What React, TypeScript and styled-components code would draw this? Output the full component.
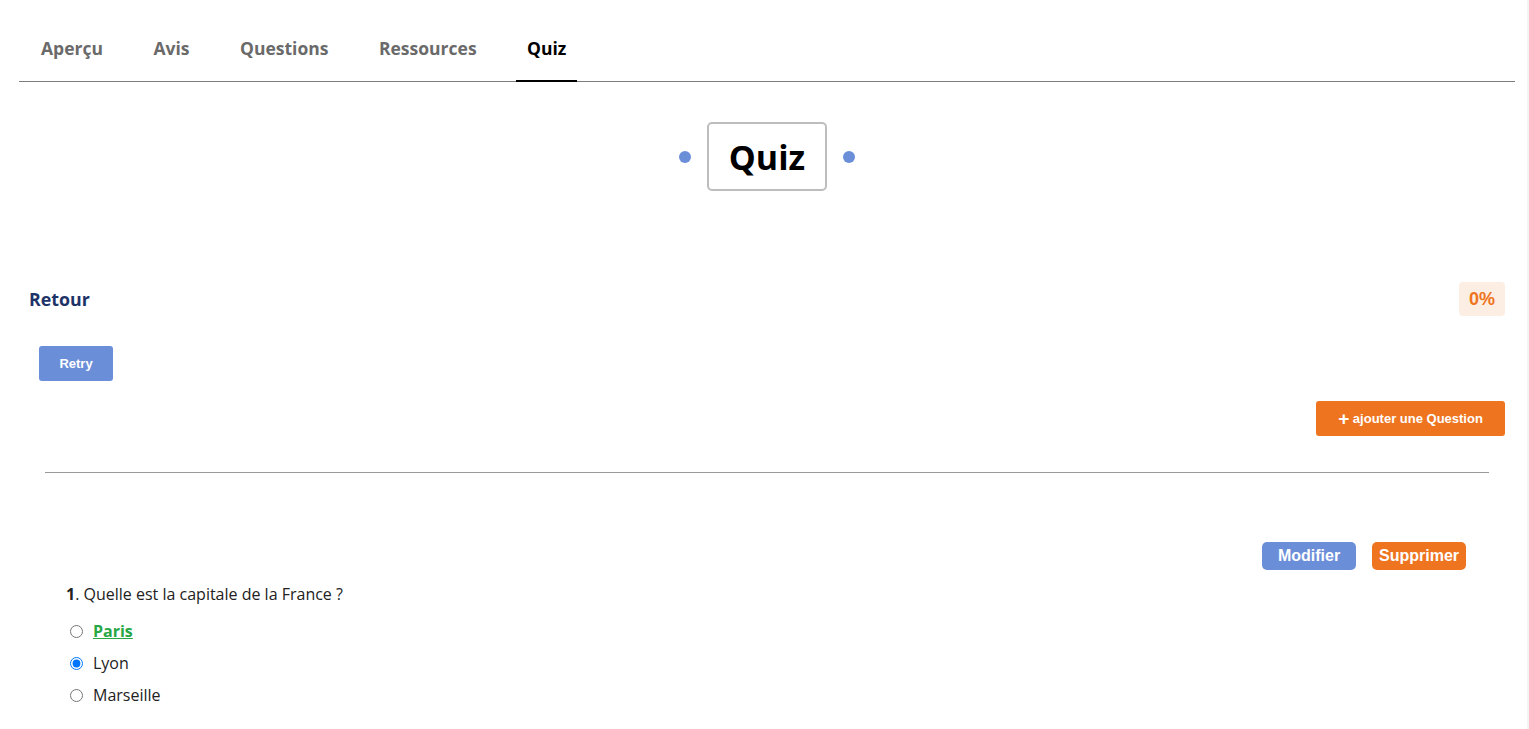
import React, { useState } from 'react';
import styled, { createGlobalStyle } from 'styled-components';

const GlobalStyle = createGlobalStyle`
  body {
    margin: 0;
    background: #fff;
    font-family: 'Open Sans', 'Noto Sans', sans-serif;
    color: #222;
  }
`;

const tabs = ['Aperçu', 'Avis', 'Questions', 'Ressources', 'Quiz'];

const answers = [
  { label: 'Paris', correct: true },
  { label: 'Lyon', correct: false },
  { label: 'Marseille', correct: false },
];

const App = () => {
  const [active, setActive] = useState('Quiz');
  const [picked, setPicked] = useState('Lyon');

  return (
    <>
      <GlobalStyle />
      <Page>
        <TabBar>
          {tabs.map((t) => (
            <Tab key={t} $active={t === active} onClick={() => setActive(t)}>
              {t}
            </Tab>
          ))}
        </TabBar>

        <TitleRow>
          <Dot />
          <TitleBox>Quiz</TitleBox>
          <Dot />
        </TitleRow>

        <HeadRow>
          <BackLink>Retour</BackLink>
          <Score>0%</Score>
        </HeadRow>

        <ActionRow>
          <SmallButton $color='#6b8ed9'>Retry</SmallButton>
        </ActionRow>

        <AddRow>
          <SmallButton $color='#ee7420' $wide>
            <span>+</span> ajouter une Question
          </SmallButton>
        </AddRow>

        <Divider />

        <QuestionBlock>
          <EditRow>
            <EditButton $color='#6b8ed9'>Modifier</EditButton>
            <EditButton $color='#ee7420'>Supprimer</EditButton>
          </EditRow>
          <QuestionText>
            <b>1</b>. Quelle est la capitale de la France ?
          </QuestionText>
          <AnswerList>
            {answers.map((a) => (
              <Answer key={a.label}>
                <input
                  type='radio'
                  name='q1'
                  checked={picked === a.label}
                  onChange={() => setPicked(a.label)}
                />
                <AnswerLabel $correct={a.correct}>{a.label}</AnswerLabel>
              </Answer>
            ))}
          </AnswerList>
        </QuestionBlock>
      </Page>
    </>
  );
};

export default App;

const Page = styled.div`
  min-height: 729px;
  padding: 0 12px 0 19px;
  border-right: 2px solid #f4f4f4;
  box-sizing: border-box;
`;

const TabBar = styled.div`
  display: flex;
  gap: 28.5px;
  padding-top: 27px;
  padding-left: 11px;
  border-bottom: 1px solid #7d7d7d;
`;

const Tab = styled.div<{ $active: boolean }>`
  font-size: 17.5px;
  font-weight: 700;
  color: ${(p) => (p.$active ? '#000' : '#6a6a6a')};
  padding: 9px 11px 20px;
  border-bottom: 2px solid ${(p) => (p.$active ? '#000' : 'transparent')};
  margin-bottom: -1px;
  cursor: pointer;
`;

const TitleRow = styled.div`
  display: flex;
  justify-content: center;
  align-items: center;
  gap: 16px;
  margin-top: 40px;
`;

const Dot = styled.span`
  width: 12px;
  height: 12px;
  border-radius: 50%;
  background: #6b8ed9;
`;

const TitleBox = styled.div`
  width: 116px;
  height: 65px;
  border: 2px solid #bdbdbd;
  border-radius: 5px;
  display: flex;
  align-items: center;
  justify-content: center;
  font-size: 34px;
  font-weight: 700;
  color: #000;
`;

const HeadRow = styled.div`
  display: flex;
  justify-content: space-between;
  align-items: center;
  margin-top: 91px;
  padding: 0 10px;
`;

const BackLink = styled.a`
  font-size: 17.8px;
  font-weight: 700;
  color: #1e3368;
  cursor: pointer;
`;

const Score = styled.div`
  background: #fdeee4;
  color: #ee7420;
  font-family: 'Liberation Sans', Arial, sans-serif;
  font-weight: 700;
  font-size: 18px;
  width: 46px;
  height: 34px;
  border-radius: 4px;
  display: flex;
  align-items: center;
  justify-content: center;
`;

const ActionRow = styled.div`
  display: flex;
  padding-left: 20px;
  margin-top: 30px;
`;

const AddRow = styled.div`
  display: flex;
  justify-content: flex-end;
  margin-top: 20px;
  padding-right: 10px;
`;

const SmallButton = styled.button<{ $color: string; $wide?: boolean }>`
  background: ${(p) => p.$color};
  color: #fff;
  border: none;
  border-radius: 3px;
  font-family: 'Liberation Sans', Arial, sans-serif;
  font-weight: 700;
  font-size: 13px;
  height: 35px;
  width: ${(p) => (p.$wide ? '189px' : '74px')};
  cursor: pointer;

  span {
    font-size: 19px;
    line-height: 0;
    vertical-align: -2px;
  }
`;

const Divider = styled.hr`
  border: none;
  border-top: 1px solid #999;
  margin: 36px 26px 0 26px;
`;

const QuestionBlock = styled.div`
  padding: 69px 49px 0 47px;
`;

const EditRow = styled.div`
  display: flex;
  justify-content: flex-end;
  gap: 16px;
`;

const EditButton = styled.button<{ $color: string }>`
  background: ${(p) => p.$color};
  color: #fff;
  border: none;
  border-radius: 5px;
  font-family: 'Liberation Sans', Arial, sans-serif;
  font-weight: 700;
  font-size: 16px;
  width: 94px;
  height: 28px;
  padding: 0;
  cursor: pointer;
`;

const QuestionText = styled.p`
  margin: 13px 0 0;
  font-size: 16px;
  color: #222;
`;

const AnswerList = styled.div`
  display: flex;
  flex-direction: column;
  gap: 10px;
  margin-top: 15px;
  padding-left: 4px;
`;

const Answer = styled.label`
  display: flex;
  align-items: center;
  gap: 10px;
  height: 22px;
  font-size: 16px;

  input {
    margin: 0;
    width: 13px;
    height: 13px;
  }
`;

const AnswerLabel = styled.span<{ $correct: boolean }>`
  color: ${(p) => (p.$correct ? '#28a745' : '#222')};
  font-weight: ${(p) => (p.$correct ? 700 : 400)};
  text-decoration: ${(p) => (p.$correct ? 'underline' : 'none')};
`;
